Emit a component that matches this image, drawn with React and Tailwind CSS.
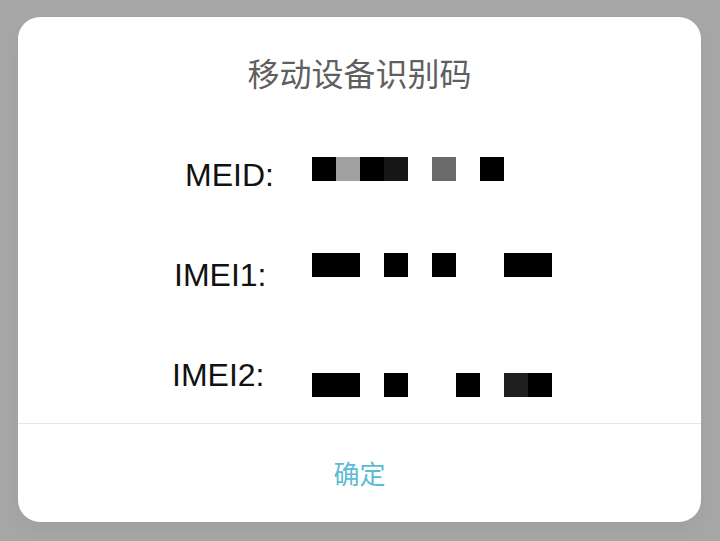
const C = {
  k: "w-[24px] h-[24px] bg-[#000000]",
  g: "w-[24px] h-[24px] bg-[#a0a0a0]",
  d: "w-[24px] h-[24px] bg-[#171717]",
  m: "w-[24px] h-[24px] bg-[#6b6b6b]",
  e: "w-[24px] h-[24px] bg-[#1f1f1f]",
  _: "w-[24px] h-[24px]",
};

const rows = [
  { label: "MEID:", pl: "pl-[167px]", h: "h-[100px]", bmt: "mt-[7px]", cells: "kgkd_m_k" },
  { label: "IMEI1:", pl: "pl-[156px]", h: "h-[100px]", bmt: "mt-[3px]", cells: "kk_k_k__kk" },
  { label: "IMEI2:", pl: "pl-[154px]", h: "h-[73px]", bmt: "mt-[23px]", cells: "kk_k__k_ek" },
];

export default function App() {
  return (
    <div className="w-[720px] h-[541px] bg-[#a7a7a7] pt-[17px] pl-[18px] overflow-hidden">
      <div className="w-[683px] h-[505px] bg-white rounded-[22px] flex flex-col shadow-[0_8px_20px_rgba(0,0,0,0.05)]">
        <div
          className="mt-[35px] h-[40px] leading-[40px] text-center text-[32px] text-[#5f5f5f]"
          style={{ fontFamily: '"Noto Sans CJK SC", "Noto Sans", sans-serif' }}
        >
          移动设备识别码
        </div>
        <div className="mt-[58px] flex flex-col">
          {rows.map((r) => (
            <div key={r.label} className={`flex items-start ${r.h}`}>
              <div
                className={`w-[294px] ${r.pl} mt-[9px] text-[32px] leading-[32px] text-[#111111]`}
                style={{ fontFamily: '"Liberation Sans", Arial, sans-serif' }}
              >
                {r.label}
              </div>
              <div className={`flex ${r.bmt}`}>
                {r.cells.split("").map((c, i) => (
                  <div key={i} className={C[c]} />
                ))}
              </div>
            </div>
          ))}
        </div>
        <div className="h-[1px] bg-[#e6e6e6]" />
        <div
          className="flex-1 flex items-center justify-center text-[26px] text-[#5bbcd4] pb-[2px]"
          style={{ fontFamily: '"Noto Sans CJK SC", "Noto Sans", sans-serif' }}
        >
          确定
        </div>
      </div>
    </div>
  );
}
